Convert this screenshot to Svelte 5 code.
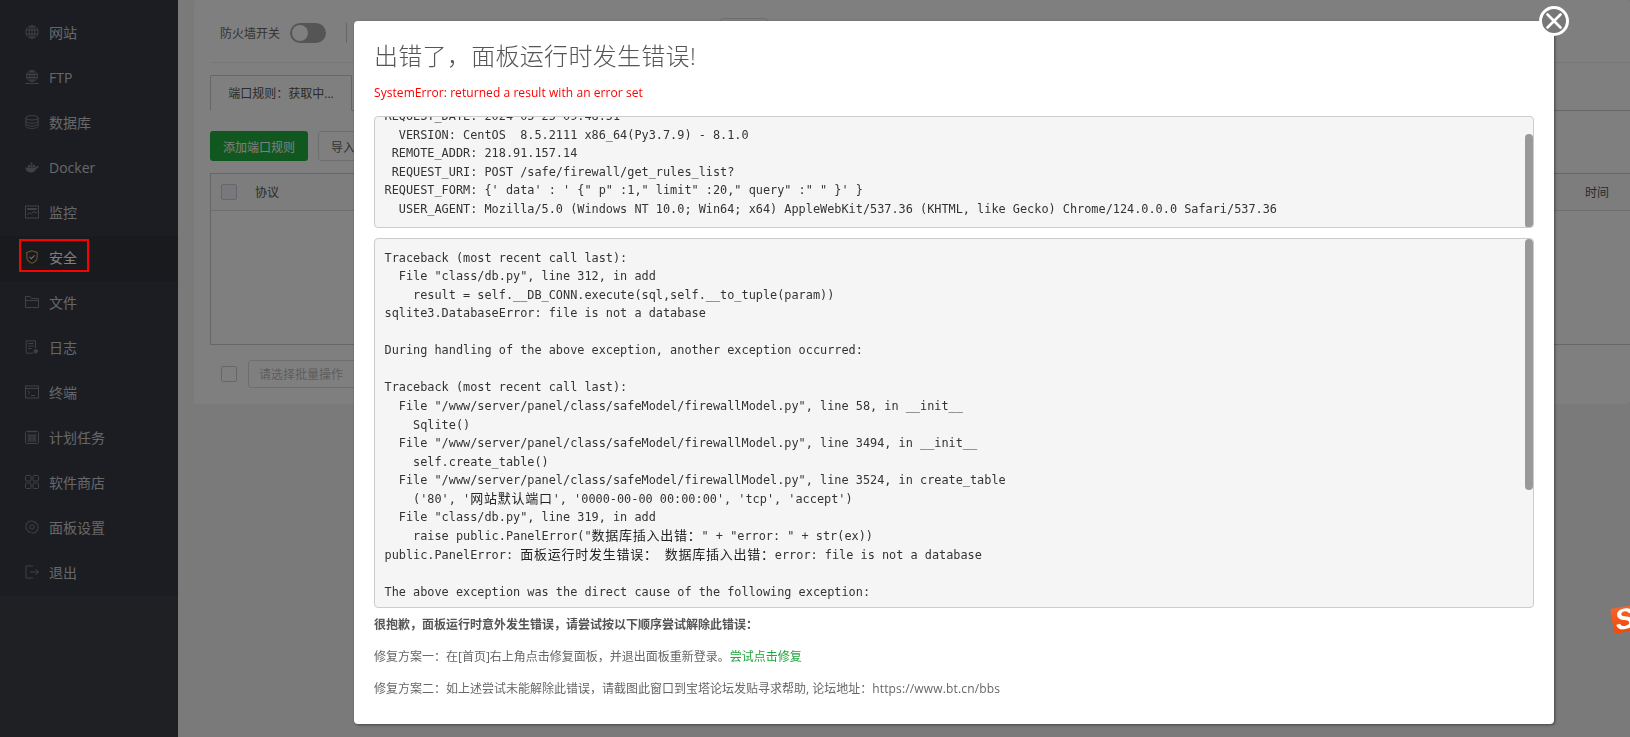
<script>
  const nav = [
    { id: 'web', label: '网站' },
    { id: 'ftp', label: 'FTP' },
    { id: 'db', label: '数据库' },
    { id: 'docker', label: 'Docker' },
    { id: 'mon', label: '监控' },
    { id: 'safe', label: '安全', active: true },
    { id: 'file', label: '文件' },
    { id: 'log', label: '日志' },
    { id: 'term', label: '终端' },
    { id: 'cron', label: '计划任务' },
    { id: 'soft', label: '软件商店' },
    { id: 'conf', label: '面板设置' },
    { id: 'exit', label: '退出' }
  ];
</script>

<div class="page">
  <aside class="side">
    <nav class="nav">
      {#each nav as item}
        <a class="item" class:active={item.active} href="#top">
          <svg class="ico" viewBox="0 0 14 14" fill="none" stroke="currentColor" stroke-width="1">
            {#if item.id === 'web'}
              <circle cx="7" cy="7" r="6.2" /><ellipse cx="7" cy="7" rx="2.8" ry="6.2" /><path d="M1 5h12M1 9h12M7 1v12" />
            {:else if item.id === 'ftp'}
              <circle cx="7" cy="6" r="5.5" /><ellipse cx="7" cy="6" rx="2.5" ry="5.5" /><path d="M1.500 4.500h11M1.500 7.500h11M7 .5v11M.5 13.500h13" />
            {:else if item.id === 'db'}
              <ellipse cx="7" cy="2.800" rx="6" ry="2.200" /><path d="M1 2.800v8.400c0 1.200 2.700 2.200 6 2.200s6-1 6-2.200V2.800M1 6c0 1.200 2.700 2.200 6 2.200S13 7.200 13 6M1 8.800c0 1.200 2.700 2.200 6 2.200s6-1 6-2.200" />
            {:else if item.id === 'docker'}
              <path fill="currentColor" stroke="none" d="M.3 7.500h10.200c.3-.9 1-1.300 1.700-1.400l1.600.6c-.5 1.300-1.400 1.900-2.400 2-.8 2.400-2.700 3.800-5.400 3.800C3 12.500.8 10.800.3 7.500zM3 5h2v2H3zm2.500 0h2v2h-2zm0-2.500h2v2h-2zM8 5h2v2H8z" />
            {:else if item.id === 'mon'}
              <rect x=".5" y="1" width="13" height="12" /><path d="M2.500 3.500h9v1h-9zM2 10l2.500-2.500 2 1.500 2.500-3 1.500 2 2-1" />
            {:else if item.id === 'safe'}
              <path d="M7 .8 1.800 2.500v4.200c0 3 2.200 5.300 5.200 6.500 3-1.200 5.200-3.500 5.200-6.500V2.500z" stroke-width="1.100" /><path d="m4.500 6.800 1.900 1.900 3.200-3.400" stroke="#d9dcdf" stroke-width="1.100" />
            {:else if item.id === 'file'}
              <path d="M.5 12.500V1.500h4.500l1.500 2h7v9zM.5 5.500h13" />
            {:else if item.id === 'log'}
              <path d="M10.500 8V.8H1.200v12.400h7.300M3.200 3.500h5.300M3.200 6h5.300M3.200 8.500h3.300" /><circle cx="10.800" cy="11.300" r="1.700" fill="currentColor" />
            {:else if item.id === 'term'}
              <rect x=".5" y="1" width="13" height="12" /><path d="M.5 3.500h13M3 6l2 1.500L3 9M6 10.500h4" />
            {:else if item.id === 'cron'}
              <rect x=".5" y="1.500" width="13" height="12" rx="1" /><path d="M3.500.3v2.400M7 .3v2.400M10.500.3v2.400M2.500 5h9M2.500 7h9M2.500 9h9M2.500 11h9M5 4.500v7M9 4.500v7" />
            {:else if item.id === 'soft'}
              <rect x=".5" y=".5" width="5.500" height="5.500" rx="1" /><rect x="8" y=".5" width="5.500" height="5.500" rx="1" /><rect x=".5" y="8" width="5.500" height="5.500" rx="1" /><rect x="8" y="8" width="5.500" height="5.500" rx="1" />
            {:else if item.id === 'conf'}
              <path d="m7 .6 1.300 1.500 2-.3.700 1.900 1.900.7-.3 2L13.400 7l-.8 1.600.3 1.700-1.900.7-.7 1.900-2-.3L7 13.400l-1.300-1.500-2 .3-.7-1.900-1.900-.7.300-1.700L.6 7l.8-1.600-.3-1.700 1.900-.7.700-1.900 2 .3z" /><circle cx="7" cy="7" r="2.200" />
            {:else}
              <path d="M8 1H1v12h7M5 7h8.500M10.500 4l3 3-3 3" />
            {/if}
          </svg>
          <span>{item.label}</span>
        </a>
      {/each}
    </nav>
  </aside>

  <main class="main">
    <section class="panel">
      <div class="toolbar">
        <span class="tlabel">防火墙开关</span>
        <span class="switch"><i></i></span>
        <span class="vline"></span>
        <span class="tbtn"></span>
      </div>
      <div class="tabs"><span class="tab">端口规则：获取中...</span></div>
      <div class="actions">
        <span class="add">添加端口规则</span>
        <span class="import">导入规则</span>
      </div>
      <div class="table">
        <div class="thead">
          <span class="check filled"></span>
          <span class="th">协议</span>
          <span class="th time">时间</span>
        </div>
      </div>
      <div class="batch">
        <span class="check"></span>
        <span class="select">请选择批量操作</span>
      </div>
    </section>
  </main>
</div>

<div class="mask"></div>

<div class="modal">
  <h1>出错了，面板运行时发生错误!</h1>
  <p class="err">SystemError: returned a result with an error set</p>
  <div class="pre first">
    <pre class="scrolled">REQUEST_DATE: 2024-05-25 09:48:51
  VERSION: CentOS  8.5.2111 x86_64(Py3.7.9) - 8.1.0
 REMOTE_ADDR: 218.91.157.14
 REQUEST_URI: POST /safe/firewall/get_rules_list?
REQUEST_FORM: &#123;' data' : ' &#123;" p" :1," limit" :20," query" :" " &#125;' &#125;
  USER_AGENT: Mozilla/5.0 (Windows NT 10.0; Win64; x64) AppleWebKit/537.36 (KHTML, like Gecko) Chrome/124.0.0.0 Safari/537.36</pre>
    <span class="thumb t1"></span>
  </div>
  <div class="pre second">
    <pre>Traceback (most recent call last):
  File "class/db.py", line 312, in add
    result = self.__DB_CONN.execute(sql,self.__to_tuple(param))
sqlite3.DatabaseError: file is not a database

During handling of the above exception, another exception occurred:

Traceback (most recent call last):
  File "/www/server/panel/class/safeModel/firewallModel.py", line 58, in __init__
    Sqlite()
  File "/www/server/panel/class/safeModel/firewallModel.py", line 3494, in __init__
    self.create_table()
  File "/www/server/panel/class/safeModel/firewallModel.py", line 3524, in create_table
    ('80', '<span class="cjk">网站默认端口</span>', '0000-00-00 00:00:00', 'tcp', 'accept')
  File "class/db.py", line 319, in add
    raise public.PanelError("<span class="cjk">数据库插入出错：</span>" + "error: " + str(ex))
public.PanelError: <span class="cjk">面板运行时发生错误：</span> <span class="cjk">数据库插入出错：</span>error: file is not a database

The above exception was the direct cause of the following exception:</pre>
    <span class="thumb t2"></span>
  </div>
  <p class="sorry">很抱歉，面板运行时意外发生错误，请尝试按以下顺序尝试解除此错误：</p>
  <p class="fix">修复方案一：在[首页]右上角点击修复面板，并退出面板重新登录。<a href="#top">尝试点击修复</a></p>
  <p class="fix">修复方案二：如上述尝试未能解除此错误，请截图此窗口到宝塔论坛发贴寻求帮助, 论坛地址：<span class="url">https://www.bt.cn/bbs</span></p>
  <button class="close" aria-label="关闭">
    <svg viewBox="0 0 24 24" width="24" height="24" fill="none" stroke="#fff" stroke-width="2.600" stroke-linecap="round"><path d="m5.500 5.500 13 13M18.500 5.500l-13 13" /></svg>
  </button>
</div>

<div class="mark"></div>
<div class="sogou"><span>S</span></div>

<style>
  :global(body) {
    margin: 0;
    overflow: hidden;
    background: #f5f5f5;
    font-family: "Open Sans", "Noto Sans CJK SC", sans-serif;
  }
  .page {
    display: flex;
    width: 1630px;
    height: 737px;
    overflow: hidden;
  }
  .side {
    flex: 0 0 178px;
    background: #3c4049;
  }
  .nav {
    background: #363b46;
    padding-top: 11px;
    height: 585px;
  }
  .item {
    display: flex;
    align-items: center;
    height: 45px;
    box-sizing: border-box;
    padding: 0 0 3px 25px;
    color: #cfcfcf;
    font-size: 14px;
    text-decoration: none;
  }
  .item.active {
    background: #30343d;
    color: #fff;
  }
  .ico {
    width: 14px;
    height: 14px;
    margin-right: 10px;
    color: #7e828a;
  }
  .active .ico {
    color: #e0a34a;
  }
  .main {
    flex: 1;
    min-width: 0;
    padding-left: 16px;
  }
  .panel {
    width: 1436px;
    height: 404px;
    background: #fff;
    border-radius: 4px;
    padding-left: 16px;
    box-sizing: border-box;
    color: #666;
    font-size: 12px;
  }
  .toolbar {
    display: flex;
    align-items: center;
    height: 58px;
    padding: 4px 0 0 10px;
    border-bottom: 1px solid #eee;
    box-sizing: content-box;
  }
  .switch {
    width: 36px;
    height: 20px;
    border-radius: 10px;
    background: #aaa;
    margin-left: 10px;
    padding: 2px;
    box-sizing: border-box;
  }
  .switch i {
    display: block;
    width: 16px;
    height: 16px;
    border-radius: 50%;
    background: #fff;
  }
  .vline {
    width: 1px;
    height: 20px;
    background: #ccc;
    margin-left: 20px;
  }
  .tbtn {
    width: 48px;
    height: 30px;
    border: 1px solid #ddd;
    border-radius: 3px;
    box-sizing: border-box;
    margin-left: 373px;
  }
  .tabs {
    height: 35px;
    margin-top: 12px;
    border-bottom: 1px solid #ccc;
    display: flex;
  }
  .tab {
    width: 142px;
    height: 36px;
    box-sizing: border-box;
    border: 1px solid #ccc;
    border-bottom-color: #fff;
    border-radius: 2px 2px 0 0;
    text-align: center;
    line-height: 35px;
    color: #555;
  }
  .actions {
    display: flex;
    gap: 10px;
    margin-top: 20px;
  }
  .add, .import {
    height: 30px;
    border-radius: 3px;
    box-sizing: border-box;
  }
  .add {
    width: 98px;
    line-height: 33px;
    background: #20b03e;
    color: #fff;
    text-align: center;
  }
  .import {
    width: 100px;
    border: 1px solid #ddd;
    padding-left: 12px;
    line-height: 31px;
  }
  .table {
    height: 172px;
    margin-top: 12px;
    box-sizing: border-box;
    border: 1px solid #ccc;
    border-right: 0;
  }
  .thead {
    display: flex;
    align-items: center;
    height: 36px;
    background: #fafafa;
    border-bottom: 1px solid #ddd;
    padding-left: 10px;
  }
  .check {
    width: 16px;
    height: 16px;
    box-sizing: border-box;
    border: 1px solid #ccc;
    border-radius: 2px;
  }
  .check.filled {
    background: #eef3f9;
  }
  .th {
    margin-left: 18px;
    color: #555;
  }
  .th.time {
    margin-left: auto;
    margin-right: 21px;
  }
  .batch {
    display: flex;
    align-items: center;
    gap: 11px;
    padding-left: 11px;
    margin-top: 15px;
  }
  .select {
    width: 300px;
    height: 28px;
    line-height: 28px;
    box-sizing: border-box;
    border: 1px solid #ddd;
    border-radius: 3px;
    padding-left: 10px;
    color: #bbb;
  }
  .mask {
    position: fixed;
    inset: 0;
    background: rgba(0, 0, 0, 0.5);
  }
  .modal {
    position: fixed;
    left: 354px;
    top: 21px;
    width: 1200px;
    height: 703px;
    box-sizing: border-box;
    padding: 20px 20px 0;
    background: #fff;
    border-radius: 4px;
    box-shadow: 1px 1px 3px rgba(0, 0, 0, 0.45);
  }
  h1 {
    margin: 0;
    font-size: 24px;
    font-weight: 300;
    line-height: 30px;
    letter-spacing: 0.3px;
    color: #555;
  }
  .err {
    margin: 13px 0 14px;
    font-size: 12px;
    line-height: 18px;
    letter-spacing: 0.065px;
    color: #f00;
  }
  .pre {
    position: relative;
    box-sizing: border-box;
    overflow: hidden;
    background: #f5f5f5;
    border: 1px solid #ccc;
    border-radius: 4px;
    padding: 0 9.5px;
  }
  .first {
    height: 112px;
  }
  .second {
    height: 370px;
    margin-top: 10px;
    padding-top: 9.5px;
  }
  pre {
    margin: 0;
    font-family: "DejaVu Sans Mono", monospace;
    font-size: 11.87px;
    line-height: 18.57px;
    color: #333;
    white-space: pre;
  }
  .scrolled {
    margin-top: -10px;
  }
  .cjk {
    font-family: "Noto Sans CJK SC", sans-serif;
    font-size: 13px;
    letter-spacing: 0.75px;
    line-height: 1;
    color: #222;
  }
  .thumb {
    position: absolute;
    right: 0;
    width: 8px;
    background: #999;
    border-radius: 4px;
  }
  .t1 {
    top: 17px;
    height: 94px;
  }
  .t2 {
    top: 0;
    height: 251px;
  }
  .sorry, .fix {
    font-size: 12px;
    line-height: 18px;
    margin: 14px 0 0;
    color: #666;
  }
  .sorry {
    margin-top: 8px;
    font-weight: 700;
    color: #555;
  }
  .fix a {
    color: #20a53a;
    text-decoration: none;
  }
  .url {
    letter-spacing: 0.15px;
  }
  .close {
    position: absolute;
    right: -15px;
    top: -15px;
    width: 30px;
    height: 30px;
    padding: 0;
    display: flex;
    align-items: center;
    justify-content: center;
    border: 3px solid #fff;
    border-radius: 50%;
    background: #777;
    box-sizing: border-box;
  }
  .mark {
    position: fixed;
    left: 19px;
    top: 239px;
    width: 70px;
    height: 33px;
    box-sizing: border-box;
    border: 2px solid #f00;
  }
  .sogou {
    position: fixed;
    left: 1612px;
    top: 606px;
    width: 34px;
    height: 25px;
    background: linear-gradient(#f4642a, #f04a0a);
    border-radius: 2px;
    transform: rotate(-10deg);
    overflow: hidden;
  }
  .sogou span {
    display: block;
    margin-left: 3px;
    font-family: "Liberation Sans", sans-serif;
    font-size: 29px;
    line-height: 25px;
    font-weight: 700;
    font-style: italic;
    color: #fff;
  }
</style>
